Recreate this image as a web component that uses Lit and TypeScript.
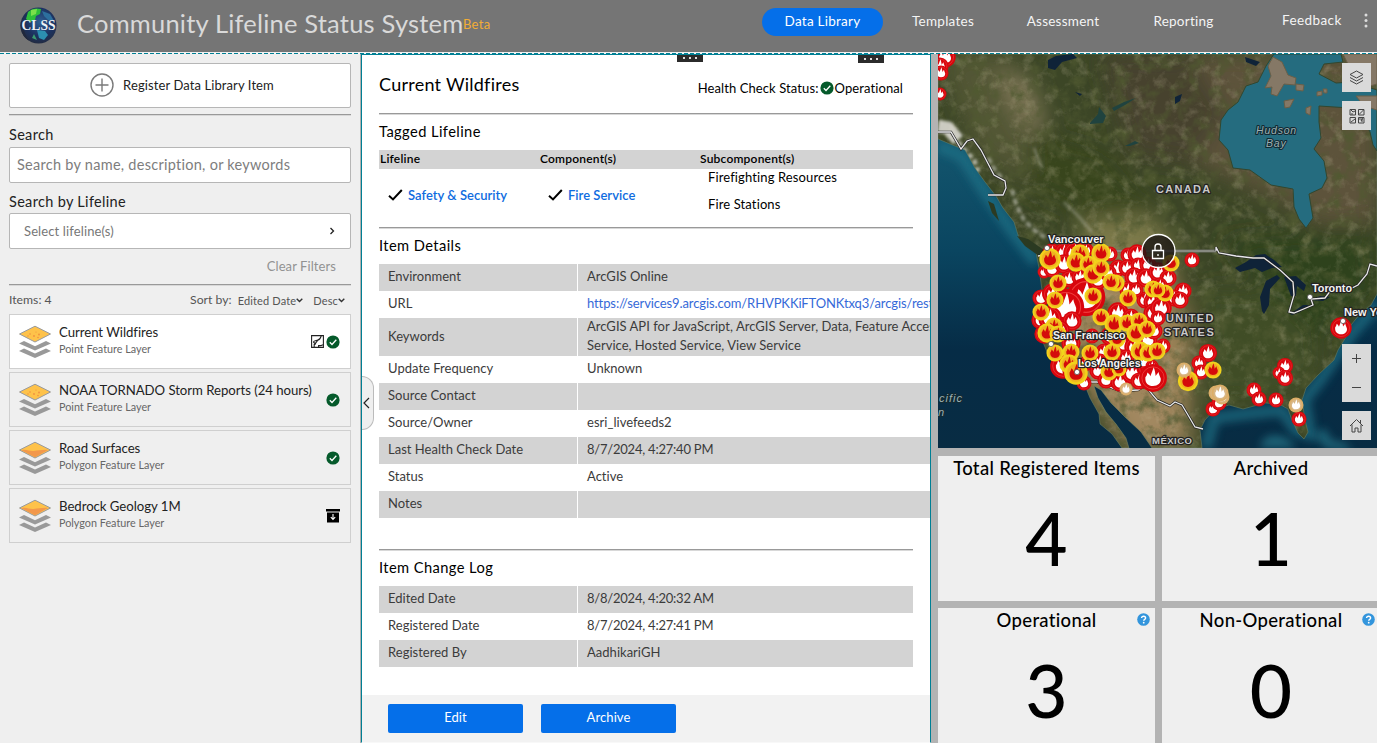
import { LitElement, html, svg, css, nothing } from "lit";
import { customElement, property } from "lit/decorators.js";

type Kind = "r" | "y" | "t";
type Fire = [number, number, number, Kind];

/* ---------- icons ---------- */
const okIcon = html`<svg class="ok" width="14" height="14" viewBox="0 0 14 14">
  <circle cx="7" cy="7" r="6.6" fill="#055a2b" />
  <path d="M3.8 7.3 6 9.5 10.3 4.8" fill="none" stroke="#fff" stroke-width="1.3" />
</svg>`;

const tick = html`<svg width="15" height="12" viewBox="0 0 15 12">
  <path d="M1 6.8 5 10.4 13.8 1" fill="none" stroke="#000" stroke-width="2" />
</svg>`;

const helpIcon = html`<svg width="13" height="13" viewBox="0 0 13 13">
  <circle cx="6.5" cy="6.5" r="6.3" fill="#3395dc" />
  <path d="M4.6 5.1c0-1.2.8-1.9 2-1.9s2 .7 2 1.8c0 1.4-1.9 1.4-1.9 2.8" fill="none" stroke="#fff" stroke-width="1.4" />
  <circle cx="6.7" cy="9.7" r=".9" fill="#fff" />
</svg>`;

const mapIcon = html`<svg width="13" height="13" viewBox="0 0 13 13" fill="none" stroke="#222" stroke-width="1.1">
  <path d="M.6.6h11.8v11.8H.6z" />
  <path d="M10.200.8C9.600 3.200 8.800 4.600 6.800 5.100 5.200 5.500 4.800 6 3.600 6 2.800 6 2.600 6.500 2.600 7.200L4.400 9M3.200 12V9.600c1.200 0 1.600-.8 1.600-1.800L7 5M7.600 12.200V10.600H10c.8 0 .8-.9 2.200-.9" />
</svg>`;

const archiveIcon = html`<svg width="14" height="14" viewBox="0 0 14 14">
  <path d="M0 0h14v2.600H0zM1 3.400h12v10H1z" fill="#000" />
  <path d="M7 5v5M4.800 8.200 7 10.400l2.200-2.200" fill="none" stroke="#fff" stroke-width="1.100" />
</svg>`;

const layerIcon = (polygon: boolean) => html`<svg width="34" height="34" viewBox="0 0 34 34">
  <path d="M1 26 6 23.500l11 5 11-5 5 2.500-16 7z" fill="#999" />
  <path d="M1 18.600 6 16l11 5.200L28 16l5 2.600-16 7z" fill="#999" />
  <path d="M1.500 9 17 1.200 32.500 9 17 17z" fill="#fec24a" stroke="#9a9a9a" stroke-width="1" />
  ${polygon
    ? svg`<path d="M3.500 9.200c4-1.600 8 1 12 .7 5-.4 9-1.500 14.500-1L17 16.300z" fill="#f2984c" />`
    : svg`<g fill="#f0903f"><circle cx="12" cy="9" r=".8"/><circle cx="16" cy="11" r=".9"/><circle cx="21" cy="9.500" r=".9"/><circle cx="10" cy="11" r=".7"/><circle cx="20" cy="12.500" r=".8"/><circle cx="18" cy="7" r=".6"/></g>`}
</svg>`;

const logo = html`<svg class="logo" width="37" height="37" viewBox="0 0 37 37">
  <defs>
    <radialGradient id="globe" cx=".55" cy=".4" r=".65">
      <stop offset="0" stop-color="#2f5f94" /><stop offset=".6" stop-color="#1c3260" /><stop offset="1" stop-color="#232a3c" />
    </radialGradient>
    <clipPath id="gc"><circle cx="18.500" cy="18.500" r="18" /></clipPath>
  </defs>
  <circle cx="18.500" cy="18.500" r="18" fill="url(#globe)" />
  <g clip-path="url(#gc)">
    <path d="M8 5c4-4 9-4 13-3l-1 5-4 2-1 4-5 2-4-3z" fill="#2fbf3a" />
    <path d="M11 3l6-1-1 5-5 2z" fill="#7be04a" />
    <path d="M22 4l8 3 4 7-6-1-4-4z" fill="#2c6f9e" />
    <path d="M17 23l8 1 3 4-4 5-5-2z" fill="#2c8fb0" />
    <path d="M0 12c3 6 3 12 9 22H0z" fill="#20283c" />
    <path d="M14 27l3 6-5-2z" fill="#3a9a70" />
  </g>
  <text x="18.500" y="23" text-anchor="middle" textLength="34" lengthAdjust="spacingAndGlyphs" class="lt">CLSS</text>
</svg>`;

/* ---------- map data ---------- */
const fires: Fire[] = [
  [945, 57, 10, "r"], [940, 66, 8, "r"], [941, 73, 7, "r"], [940, 94, 6, "r"],
  [1052, 253, 9, "r"], [1064, 252, 9, "r"], [1075, 253, 11, "r"], [1086, 250, 7, "r"], [1110, 254, 7, "r"],
  [1128, 255, 7, "r"], [1137, 254, 9, "r"], [1044, 272, 6, "r"], [1052, 269, 8, "r"], [1064, 264, 9, "r"],
  [1060, 283, 8, "r"], [1069, 279, 8, "r"], [1080, 277, 8, "r"], [1090, 283, 8, "r"], [1118, 268, 8, "r"],
  [1127, 268, 8, "r"], [1138, 265, 7, "r"], [1148, 265, 8, "r"], [1134, 277, 9, "r"], [1146, 278, 9, "r"],
  [1158, 272, 9, "r"], [1041, 298, 8, "r"], [1053, 294, 10, "r"], [1086, 297, 18, "r"], [1066, 307, 17, "r"],
  [1098, 280, 9, "r"], [1108, 273, 8, "r"], [1041, 320, 9, "r"], [1050, 318, 11, "r"], [1072, 321, 9, "r"],
  [1044, 334, 9, "r"], [1060, 330, 9, "r"], [1071, 343, 9, "r"], [1092, 336, 7, "r"], [1055, 352, 7, "r"],
  [1118, 313, 10, "r"], [1131, 317, 8, "r"], [1145, 300, 8, "r"], [1153, 302, 9, "r"], [1128, 290, 8, "r"],
  [1136, 290, 7, "r"], [1153, 313, 9, "r"], [1110, 336, 9, "r"], [1124, 344, 9, "r"], [1135, 347, 10, "r"],
  [1148, 340, 9, "r"], [1063, 366, 12, "r"], [1072, 371, 9, "r"], [1084, 383, 7, "r"], [1098, 371, 8, "r"],
  [1106, 380, 8, "r"], [1115, 369, 9, "r"], [1120, 382, 9, "r"], [1132, 373, 10, "r"], [1139, 381, 8, "r"],
  [1144, 362, 7, "r"], [1104, 352, 8, "r"], [1100, 361, 7, "r"], [1126, 358, 8, "r"], [1085, 364, 7, "r"],
  [1168, 278, 8, "r"], [1183, 291, 8, "r"], [1174, 298, 8, "r"], [1180, 300, 8, "r"], [1161, 308, 10, "r"],
  [1154, 331, 8, "r"], [1163, 346, 7, "r"], [1152, 366, 6, "r"], [1160, 285, 7, "r"], [1158, 318, 7, "r"],
  [1153, 378, 13, "r"],
  [1192, 260, 7, "r"], [1341, 328, 10, "r"], [1208, 353, 8.500, "r"], [1199, 363, 7, "r"], [1201, 372, 7, "r"],
  [1285, 366, 7.500, "r"], [1279, 373, 6, "r"], [1285, 378, 7.500, "r"], [1254, 390, 7, "r"], [1259, 399, 7, "r"],
  [1276, 400, 7, "r"], [1213, 409, 7, "r"], [1219, 403, 7, "r"], [1299, 419, 7, "r"],
  [1050, 259, 10, "y"], [1080, 254, 9, "y"], [1076, 262, 9, "y"], [1101, 253, 9, "y"], [1088, 264, 8, "y"],
  [1093, 274, 9, "y"], [1101, 268, 8, "y"], [1116, 283, 8, "y"], [1111, 282, 8, "y"], [1058, 283, 8, "y"],
  [1055, 300, 8, "y"], [1041, 312, 8, "y"], [1093, 296, 8, "y"], [1128, 298, 8, "y"], [1153, 289, 8, "y"],
  [1101, 317, 8, "y"], [1114, 324, 9, "y"], [1127, 323, 8, "y"], [1139, 321, 8, "y"], [1136, 333, 9, "y"],
  [1147, 329, 8, "y"], [1054, 326, 8, "y"], [1047, 333, 9, "y"], [1058, 334, 8, "y"], [1117, 339, 8, "y"],
  [1055, 353, 8, "y"], [1071, 352, 8, "y"], [1090, 353, 8, "y"], [1112, 352, 8, "y"], [1140, 351, 9, "y"],
  [1148, 353, 8, "y"], [1069, 364, 9, "y"], [1076, 373, 11, "y"], [1109, 372, 8, "y"], [1119, 369, 7, "y"],
  [1171, 263, 8, "y"], [1165, 293, 8, "y"], [1158, 290, 7, "y"], [1157, 351, 8, "y"],
  [1213, 370, 8, "y"], [1188, 381, 9.500, "y"],
  [1184, 370, 7, "t"], [1126, 389, 6, "t"], [1216, 393, 7, "t"], [1222, 397, 7, "t"], [1220, 393, 8, "t"], [1296, 405, 7, "t"],
];

const fill: Record<Kind, [string, string, string]> = {
  r: ["#d8060d", "#d8060d", "#fff"],
  y: ["#f2d31b", "#efb321", "#d40b0b"],
  t: ["#dcae68", "#d8b684", "#fff"],
};

const flame = "M-.55-.05C-.47-.14-.42-.27-.4-.4-.28-.32-.22-.22-.19-.12-.11-.34-.02-.56.05-.78.14-.56.17-.34.19-.14.25-.22.34-.34.4-.43.43-.22.52-.1.56.06.58.38.34.58 0 .58-.34.58-.58.38-.55-.05z";

const fire = ([x, y, r, k]: Fire) => {
  const [ring, disc, glyph] = fill[k];
  return svg`<g transform="translate(${x} ${y}) scale(${r * 1.07})">
    <circle r="1" fill=${ring} />
    <circle r=".8" fill=${disc} stroke=${k === "r" ? "#ee3b3b" : ring} stroke-width=".06" />
    <path d=${flame} fill=${glyph} />
  </g>`;
};

const LAND = "M938 54H1377V294L1371 305 1360 314 1351 325 1346 337 1338 350 1334 360 1318 375 1306 388 1302 400 1305 420 1308 432 1304 439 1298 433 1292 420 1288 409 1279 404 1265 403 1254 406 1243 409 1229 405 1215 409 1205 420 1200 430 1202 448H1152L1141 432 1126 418 1111 403 1101 390 1094 386 1098 398 1106 412 1116 424 1126 438 1129 448H1122L1112 434 1100 424 1099 414 1090 398 1086 388 1076 379 1060 372 1047 352 1036 325 1037 308 1042 290 1039 268 1036 252 1019 238 1014 222 1003 208 996 196 985 182 975 168 965 150 950 144 938 139z";
const BAY = "M1274 54 1266 66 1258 82 1246 86 1238 102 1228 110 1221 120 1219 140 1228 150 1233 168 1250 170 1271 185 1293 189 1294 207 1299 219 1306 228 1313 218 1309 194 1322 188 1327 178 1324 161 1314 149 1321 138 1319 122 1319 106 1350 108 1362 116 1370 132 1373 145 1377 151V90L1352 82 1336 83 1319 74 1324 64 1343 62 1341 54z";
const ISLANDS = "M1273 57 1282 62 1288 75 1296 78 1295 85 1284 84 1277 96 1271 94 1272 87 1265 88 1271 76 1268 66zM1296 84 1304 85 1303 91 1296 90zM1284 101 1294 99 1290 107 1285 108zM1306 108 1311 106 1310 115 1306 113zM1317 92l5-1 0 4-5 1zM1323 89l4 0 0 4-3 0zM1343 54h34v30l-14 4-8-10zM1356 96l21 0 0 14-13-4z";
const LAKES = "M1235 268 1246 262 1256 255 1265 254 1274 260 1282 267 1272 268 1262 272 1255 268 1240 272zM1262 311 1260 297 1266 281 1277 275 1280 278 1270 289 1269 305 1264 314zM1284 277 1296 276 1306 285 1304 291 1297 286 1296 296 1291 296zM1290 314 1303 305 1309 305 1300 312 1292 315zM1310 300 1320 296 1330 297 1323 301zM1048 60 1056 56 1073 54 1077 58 1062 62 1055 70 1048 68zM1075 92l7 2-2 2zM1245 57l15 5-4 4-10-4zM1175 97l7-3-2 7-5 3z";
const LAKES2 = "M1090 123 1098 114 1099 107 1106 116 1103 123 1090 124zM1112 108 1124 102 1136 98 1125 105 1114 111zM1125 146l10-5 4 2-9 3z";

const relief = svg`
  <defs>
    <linearGradient id="sea" x1="0" y1="0" x2="0" y2="1"><stop offset="0" stop-color="#1b6379"/><stop offset=".5" stop-color="#0a4560"/><stop offset=".75" stop-color="#062c46"/><stop offset="1" stop-color="#082c43"/></linearGradient>
    <filter id="soft" x="-50%" y="-50%" width="200%" height="200%"><feGaussianBlur stdDeviation="11"/></filter>
    <filter id="soft2" x="-50%" y="-50%" width="200%" height="200%"><feGaussianBlur stdDeviation="4"/></filter>
    <filter id="soft3" x="-50%" y="-50%" width="200%" height="200%"><feGaussianBlur stdDeviation="1.500"/></filter>
    <filter id="grain" x="0" y="0" width="100%" height="100%"><feTurbulence type="fractalNoise" baseFrequency=".07" numOctaves="5" seed="8"/><feColorMatrix values="0 0 0 0 .08  0 0 0 0 .1  0 0 0 0 .03  2.200 0 0 0 -1.000"/></filter>
    <filter id="glint" x="0" y="0" width="100%" height="100%"><feTurbulence type="fractalNoise" baseFrequency=".09" numOctaves="5" seed="31"/><feColorMatrix values="0 0 0 0 .62  0 0 0 0 .56  0 0 0 0 .38  0 2.000 0 0 -1.000"/></filter>
    <clipPath id="land"><path d=${LAND}/></clipPath>
  </defs>
  <rect x="938" y="54" width="439" height="394" fill="url(#sea)"/>
  <g filter="url(#soft2)" fill="none" stroke="#23778b" stroke-width="12" opacity=".65"><path d="M938 146 962 156 985 192 1010 228 1036 262"/><path d="M1377 304 1352 333 1320 380 1304 400 1310 434 1296 430 1282 410 1245 414 1214 418 1206 448" /></g>
  <path d="M1260 448C1262 432 1285 430 1296 448z M1325 448l-10-14 10-6 6 12 14 3 8 9z" fill="#2a8698" opacity=".6" filter="url(#soft2)"/>
  <g clip-path="url(#land)">
    <rect x="938" y="54" width="439" height="394" fill="#3c4626"/>
    <g filter="url(#soft)">
      <path d="M1160 54h217v170h-60l-30-20-90-40-50-30z" fill="#5d523b"/>
      <path d="M1100 54l90 0 40 60-40 50-60-10z" fill="#47432f"/>
      <path d="M938 54l70 0 30 60-10 70-50-30z" fill="#525734"/>
      <path d="M1000 70l30 10 15 40-10 20-30-50z" fill="#857b5b"/>
      <path d="M1080 220l70-5 30 35-20 30-80-10z" fill="#7c7948"/>
      <path d="M1070 260l100 0 20 70 0 70 0 48-60 0-60-80z" fill="#9d8358"/>
      <path d="M1100 390l70 10 20 48-60 0z" fill="#a28860"/>
      <path d="M1200 290l110 0 10 80-40 30-70 0z" fill="#414d27"/>
      <path d="M1220 240l150-10 7 60-60 50-40-40z" fill="#2f421d"/>
      <path d="M1030 130l70 20 60 60-70 10-60-30z" fill="#38451f"/>
    </g>
    <rect x="938" y="54" width="439" height="394" filter="url(#grain)"/>
    <rect x="938" y="54" width="439" height="394" filter="url(#glint)" opacity=".32"/>
    <g filter="url(#soft3)" fill="none" stroke="#e4e2dc">
      <path d="M938 126 948 128 958 140" stroke-width="13" opacity=".85"/>
      <path d="M958 142 966 152 974 160 978 172" stroke-width="5" opacity=".7" stroke-dasharray="5 3"/>
      <path d="M988 158 996 172 1002 178M1012 190 1016 204 1024 220 1034 230 1046 238" stroke-width="4" opacity=".5" stroke-dasharray="6 3"/>
      <path d="M1034 148 1042 168M1064 202 1080 218 1092 232" stroke-width="3" opacity=".3"/>
    </g>
  </g>
  <path d=${LAND} fill="none" stroke="#6f8a6d" stroke-width=".8" opacity=".6"/>
  <path d=${BAY} fill="#256c7f" stroke="#32472f" stroke-width="1"/>
  <path d=${ISLANDS} fill="#857866" stroke="#6a5f48" stroke-width="1"/>
  <path d=${LAKES} fill="#0f2338"/>
  <path d=${LAKES2} fill="#20433f"/>
  <path d="M988 201 994 204 999 221 992 213z" fill="#2b3a22"/>
  <path d="M1017 236 1028 239 1044 250 1039 256 1025 246z" fill="#2b3a22"/>
`;

const BORDERS = [
  "M938 132 951 132 961 149 967 141 973 139 981 150 994 175 1005 181 1006 188 1003 195 988 195",
  "M1216 251 1216 247 1219 253 1236 256 1253 258 1264 258 1280 270 1293 282 1294 295 1289 312 1294 313 1313 305 1311 299 1325 298 1331 290 1346 291 1358 285 1367 274 1370 264 1377 266",
  "M1080 382 1097 382 1120 391 1138 390 1143 387 1147 388 1157 400 1170 406 1175 402 1182 405 1188 415 1195 427 1203 429",
  "M1047 251 1044 255 1038 256",
];

interface Place { t: string; x: number; y: number; s: number; sp?: number; c?: string }
const places: Place[] = [
  { t: "Vancouver", x: 1048, y: 243, s: 11 },
  { t: "San Francisco", x: 1053, y: 339, s: 10.600 },
  { t: "Los Angeles", x: 1078, y: 367, s: 10.600 },
  { t: "Toronto", x: 1312, y: 292, s: 10.800 },
  { t: "New York", x: 1344, y: 316, s: 11 },
  { t: "CANADA", x: 1156, y: 193, s: 11, sp: 1.300, c: "ctry" },
  { t: "UNITED", x: 1166, y: 322, s: 11, sp: 1.300, c: "ctry" },
  { t: "STATES", x: 1164, y: 335.500, s: 11, sp: 1.600, c: "ctry" },
  { t: "MÉXICO", x: 1152, y: 444, s: 9.500, sp: .5, c: "ctry" },
  { t: "Hudson", x: 1256, y: 134, s: 10.500, sp: .8, c: "water" },
  { t: "Bay", x: 1266, y: 146.500, s: 10.500, sp: .8, c: "water" },
  { t: "cific", x: 939, y: 402, s: 11, sp: 1, c: "water" },
  { t: "n", x: 938, y: 416, s: 11, sp: 1, c: "water" },
];
const dots: [number, number][] = [[1047, 248], [1051, 344], [1077, 372], [1310, 297], [1343, 321]];

@customElement("lifeline-map")
export class LifelineMap extends LitElement {
  static styles = css`
    :host { display: block; position: relative; overflow: hidden; background: #0b3f5a; }
    .canvas { display: block; width: 439px; height: 394px; }
    .label { font-family: "Liberation Sans", Arial, sans-serif; font-weight: 700; fill: #f3f3f3; stroke: #222; stroke-width: 2.4px; paint-order: stroke; stroke-linejoin: round; }
    .ctry { fill: #c9c9c9; }
    .water { fill: #9db1b4; font-style: italic; font-weight: 400; stroke: #122a33; stroke-width: 2.2px; }
    .tools { position: absolute; right: 6px; top: 9px; bottom: 8px; display: flex; flex-direction: column; gap: 9px; }
    .tool { width: 29px; height: 29px; background: #dadada; display: flex; align-items: center; justify-content: center; }
    .zoom { margin-top: auto; height: 58px; flex-direction: column; }
    .half { flex: 1; display: flex; align-items: center; }
    svg { fill: none; stroke: #444; }
    .canvas { stroke: none; }
  `;

  render() {
    return html`
      <svg class="canvas" viewBox="938 54 439 394">
        ${relief}
        <path d="M1048 251H1216" stroke="#6d6f66" stroke-width="3" /><path d="M1048 251H1216" stroke="#a3a59c" stroke-width="1" />
        ${BORDERS.map((d) => svg`<path d=${d} fill="none" stroke="#222" stroke-width="2.600"/><path d=${d} fill="none" stroke="#e9e9e9" stroke-width="1.300"/>`)}
        ${fires.map(fire)}
        ${dots.map(([x, y]) => svg`<circle cx=${x} cy=${y} r="2.600" fill="#fff" stroke="#555" stroke-width=".8"/>`)}
        ${places.map((p) => svg`<text class="label ${p.c ?? ""}" x=${p.x} y=${p.y} font-size=${p.s} letter-spacing=${p.sp ?? 0}>${p.t}</text>`)}
        <circle cx="1158.500" cy="251" r="16.500" fill="#1b1714" fill-opacity=".8" stroke="#fff" stroke-width="1.300" />
        <path d="M1152.500 250.500h11v8h-11zM1155 250.500v-3.500a3 3 0 0 1 6 0v3.500M1158 254v2" fill="none" stroke="#fff" stroke-width="1.300" />
      </svg>
      <div class="tools">
        <div class="tool"><svg width="15" height="15" viewBox="0 0 15 15"><path d="M7.500 1 14 4.500 7.500 8 1 4.500zM1 7.500 7.500 11 14 7.500M1 10.500 7.500 14 14 10.500" /></svg></div>
        <div class="tool"><svg width="16" height="16" viewBox="0 0 16 16"><path d="M1 1.500h5.500V7H1zM9.500 1.500H15V7H9.500zM1 9.500h5.500V15H1zM9.500 9.500H15V15H9.500zM2 2l2 2 2-1M3 7V5M10 6.500l4.500-4.500M2 14l4-3M10 11h3v3M12 13l2-3" /></svg></div>
        <div class="tool zoom">
          <div class="half"><svg width="11" height="11" viewBox="0 0 11 11"><path d="M5.500 1v9M1 5.500h9" /></svg></div>
          <div class="half"><svg width="11" height="11" viewBox="0 0 11 11"><path d="M1 5.500h9" /></svg></div>
        </div>
        <div class="tool"><svg width="15" height="15" viewBox="0 0 15 15"><path d="M1 8 7.500 1.500 14 8M3 6.500v7.500h3v-4h3v4h3V6.500M11.500 5V2" /></svg></div>
      </div>
    `;
  }
}

@customElement("stat-card")
export class StatCard extends LitElement {
  @property() label = "";
  @property() value = "";
  @property({ type: Boolean }) help = false;

  static styles = css`
    :host { display: grid; grid-template-columns: 1fr; background: #efefef; color: #000; position: relative; align-content: start; text-align: center; }
    .label { font-size: 18.5px; line-height: 25px; letter-spacing: 0.32px; font-weight: 500; white-space: nowrap; }
    .value { font-size: 73px; line-height: 115px; font-weight: 500; letter-spacing: 0; }
    .help { position: absolute; right: 5px; top: 5px; display: flex; }
  `;

  render() {
    return html`<div class="label">${this.label}</div>
      <div class="value">${this.value}</div>
      ${this.help ? html`<div class="help">${helpIcon}</div>` : nothing}`;
  }
}

const items = [
  { name: "Current Wildfires", type: "Point Feature Layer", active: true, map: true },
  { name: "NOAA TORNADO Storm Reports (24 hours)", type: "Point Feature Layer" },
  { name: "Road Surfaces", type: "Polygon Feature Layer" },
  { name: "Bedrock Geology 1M", type: "Polygon Feature Layer", archived: true },
];

const details: [string, unknown][] = [
  ["Environment", "ArcGIS Online"],
  ["URL", html`<span class="url">https://services9.arcgis.com/RHVPKKiFTONKtxq3/arcgis/rest/services</span>`],
  ["Keywords", html`ArcGIS API for JavaScript, ArcGIS Server, Data, Feature Access, Feature<br />Service, Hosted Service, View Service`],
  ["Update Frequency", "Unknown"],
  ["Source Contact", ""],
  ["Source/Owner", "esri_livefeeds2"],
  ["Last Health Check Date", html`<span class="date">8/7/2024, 4:27:40 PM</span>`],
  ["Status", "Active"],
  ["Notes", ""],
];

const log: [string, unknown][] = [
  ["Edited Date", html`<span class="date">8/8/2024, 4:20:32 AM</span>`],
  ["Registered Date", html`<span class="date">8/7/2024, 4:27:41 PM</span>`],
  ["Registered By", "AadhikariGH"],
];

@customElement("app-root")
export class AppRoot extends LitElement {
  static styles = css`
    :host { display: flex; flex-direction: column; width: 1377px; height: 743px; overflow: hidden; font-family: Lato, "Open Sans", sans-serif; font-size: 13.5px; letter-spacing: 0.3px; color: #222; background: #b3b3b3; }
    * { box-sizing: border-box; }
    svg { display: block; flex: none; }
    .header { height: 52px; flex: none; background: #757575; display: flex; align-items: flex-start; color: #f4f4f4; padding-left: 20px; white-space: nowrap; }
    .logo { margin-top: 7px; }
    .lt { font-family: "Liberation Serif", serif; font-weight: 700; font-size: 15px; fill: #eef2f6; letter-spacing: 0; }
    .title { margin-left: 20px; font-size: 25.5px; line-height: 47px; letter-spacing: 0.2px; color: #d9d9d9; width: 386px; font-weight: 400; }
    .beta { color: #f2ad35; font-size: 13px; line-height: 49px; letter-spacing: 0.3px; width: 299px; }
    .nav { display: grid; grid-template-columns: 121px 120px 120px 121px; padding-top: 8px; }
    .tab { height: 28px; line-height: 27px; text-align: center; letter-spacing: 0.25px; }
    .on { background: #056fe9; border-radius: 14px; color: #fff; }
    .feedback { margin-left: 38px; line-height: 41px; width: 82px; letter-spacing: 0.4px; }
    .kebab { padding-top: 13px; }
    .dash { height: 2px; flex: none; background: repeating-linear-gradient(90deg, #007f94 0 4px, #f4f4f4 4px 6px) 0 1px / 100% 1px no-repeat, #f0f0f0; }
    .body { flex: 1; min-height: 0; display: grid; grid-template-columns: 361px 570px 446px; }

    .side { background: #efefef; border-right: 1px solid #b0b0b0; padding: 9px 9px 0; display: flex; flex-direction: column; white-space: nowrap; }
    .box { border: 1px solid #b6b6b6; border-radius: 2px; background: #fff; display: flex; align-items: center; flex: none; }
    .register { height: 45px; justify-content: center; gap: 9px; font-size: 13px; padding: 0 0 1px 4px; letter-spacing: 0.1px; }
    .rule { height: 2px; flex: none; background: #999; border-bottom: 1px solid #d8d8d8; }
    .rule-top { margin: 6px 0 9px; }
    .lbl { font-size: 14.5px; line-height: 20px; color: #222; letter-spacing: 0.32px; }
    .input { height: 36px; margin: 2px 0 9px; padding-bottom: 2px; }
    .ph { font-size: 14.5px; color: #7d7d7d; padding-left: 7px; letter-spacing: 0.27px; }
    .select { justify-content: space-between; margin: 1px 0 0; padding: 0 15px 1px 14px; color: #777; font-size: 13px; letter-spacing: 0.12px; }
    .clear { text-align: right; padding-right: 15px; font-size: 13px; line-height: 20px; color: #929292; margin: 7px 0 8px; letter-spacing: 0.08px; }
    .sort { display: flex; align-items: center; height: 28px; font-size: 12.2px; color: #555; padding: 0 6px 2px 0; letter-spacing: 0.02px; }
    .sort-l { margin-left: auto; margin-right: 6px; }
    .sort-v { font-size: 11px; display: flex; align-items: center; padding-top: 3px; letter-spacing: 0.15px; }
    .gap { margin-left: 10px; }
    .cards { display: grid; grid-template-columns: minmax(0, 1fr); gap: 3px; }
    .card { height: 55px; border: 1px solid #cfcfcf; display: flex; align-items: center; padding: 0 10px 0 8px; gap: 7px; }
    .active { background: #fff; }
    .meta { flex: 1; min-width: 0; color: #222; font-size: 13.2px; line-height: 17px; padding-bottom: 2px; letter-spacing: -0.04px; }
    .type { font-size: 10.8px; line-height: 16px; color: #666; letter-spacing: 0; }
    .icons { display: flex; gap: 2px; align-items: center; }

    .detail { background: #fff; border: 1px solid #007f94; border-bottom: 1px solid #f8f8f8; position: relative; display: flex; flex-direction: column; overflow: hidden; color: #000; white-space: nowrap; }
    .inner { width: 551px; padding-left: 17px; flex: 1; }
    .grip { position: absolute; top: -2px; left: 315px; width: 26px; height: 9px; background: #2b2b2b; display: flex; gap: 4px; align-items: center; justify-content: center; }
    .grip2 { left: 496px; top: -1px; }
    .grip i { width: 2px; height: 2px; background: #ddd; }
    .handle { position: absolute; left: -2px; top: 321px; width: 14px; height: 54px; background: #efefef; border: 1px solid #bbb; border-left: none; border-radius: 0 12px 12px 0; display: flex; align-items: center; justify-content: center; }
    .head { height: 58px; display: flex; align-items: center; justify-content: space-between; }
    .name { font-size: 18px; letter-spacing: 0.25px; }
    .health { display: flex; align-items: center; gap: 1px; padding: 8px 10px 0 0; font-size: 13px; letter-spacing: 0.1px; }
    h3 { margin: 0; font-weight: 400; font-size: 14.7px; letter-spacing: 0.4px; line-height: 32px; height: 35px; }
    .lh { display: grid; grid-template-columns: 160px 160px 1fr; background: #d3d3d3; height: 19px; line-height: 18px; font-size: 12px; font-weight: 600; padding-left: 1px; letter-spacing: 0.2px; }
    .lr { display: grid; grid-template-columns: 160px 160px 1fr; height: 58px; padding-left: 9px; }
    .lk { display: flex; align-items: center; gap: 5px; color: #0f6ce0; font-weight: 600; font-size: 13px; height: 51px; letter-spacing: 0.02px; }
    .sub { line-height: 27px; margin-top: -5px; font-size: 13px; letter-spacing: 0.12px; }
    .table { display: grid; color: #3b3b3b; }
    .wide { width: 571px; }
    .row { display: grid; grid-template-columns: 198px 1fr; column-gap: 1px; min-height: 27px; line-height: 19px; font-size: 13px; letter-spacing: 0.02px; }
    .cell { padding-left: 9px; display: flex; align-items: center; padding-bottom: 2px; overflow: hidden; }
    .row:nth-child(odd) .cell { background: #d3d3d3; }
    .kw { height: 38px; }
    .url { color: #3569d8; letter-spacing: -0.1px; }
    .date { letter-spacing: -0.22px; }
    .foot { height: 47px; background: #f2f2f2; padding: 9px 26px; display: flex; gap: 18px; }
    .btn { width: 135px; height: 29px; border-radius: 2px; background: #056fe9; color: #fff; text-align: center; line-height: 26px; font-size: 13px; letter-spacing: 0.1px; }
    .tb { height: 31px; }

    .right { display: grid; grid-template-columns: 439px; grid-template-rows: 394px 287px; row-gap: 8px; padding-left: 7px; background: #b3b3b3; }
    .stats { display: grid; grid-template-columns: 217px 218px; grid-template-rows: 145px 135px; gap: 7px; }
  `;

  rows(data: [string, unknown][]) {
    return data.map(([k, v]) => html`<div class="row ${k === "Keywords" ? "kw" : ""}"><div class="cell">${k}</div><div class="cell"><span>${v}</span></div></div>`);
  }

  render() {
    const caret = html`<svg width="7" height="5" viewBox="0 0 7 5"><path d="M.7.8 3.500 3.600 6.300.8" fill="none" stroke="#333" stroke-width="1.400" /></svg>`;
    return html`
      <div class="header">
        ${logo}
        <div class="title">Community Lifeline Status System</div>
        <div class="beta">Beta</div>
        <div class="nav">
          <div class="tab on">Data Library</div><div class="tab">Templates</div><div class="tab">Assessment</div><div class="tab">Reporting</div>
        </div>
        <div class="feedback">Feedback</div>
        <svg class="kebab" width="4" height="28" viewBox="0 0 4 15"><g fill="#ddd"><circle cx="2" cy="2" r="1.500" /><circle cx="2" cy="7.500" r="1.500" /><circle cx="2" cy="13" r="1.500" /></g></svg>
      </div>
      <div class="dash"></div>
      <div class="body">
        <div class="side">
          <div class="box register">
            <svg width="24" height="24" viewBox="0 0 24 24" fill="none" stroke="#7a7a7a" stroke-width="1.400"><circle cx="12" cy="12" r="11" /><path d="M12 5.500v13M5.500 12h13" /></svg>
            Register Data Library Item
          </div>
          <div class="rule rule-top"></div>
          <div class="lbl">Search</div>
          <div class="box input"><span class="ph">Search by name, description, or keywords</span></div>
          <div class="lbl">Search by Lifeline</div>
          <div class="box input select"><span>Select lifeline(s)</span>
            <svg width="6" height="8" viewBox="0 0 6 8"><path d="M1.500 1 4.500 4 1.500 7" fill="none" stroke="#222" stroke-width="1.300" /></svg></div>
          <div class="clear">Clear Filters</div>
          <div class="rule"></div>
          <div class="sort"><span>Items: 4</span><span class="sort-l">Sort by:</span><span class="sort-v">Edited Date${caret}</span><span class="sort-v gap">Desc${caret}</span></div>
          <div class="cards">
            ${items.map((it) => html`<div class="card ${it.active ? "active" : ""}">
              ${layerIcon(it.type.startsWith("Polygon"))}
              <div class="meta">${it.name}<div class="type">${it.type}</div></div>
              <div class="icons">${it.map ? mapIcon : nothing}${it.archived ? archiveIcon : okIcon}</div>
            </div>`)}
          </div>
        </div>
        <div class="detail">
          <div class="inner">
            <div class="head"><span class="name">Current Wildfires</span><span class="health">Health Check Status:${okIcon}Operational</span></div>
            <div class="rule"></div>
            <h3>Tagged Lifeline</h3>
            <div class="lh"><span>Lifeline</span><span>Component(s)</span><span>Subcomponent(s)</span></div>
            <div class="lr"><span class="lk">${tick}Safety &amp; Security</span><span class="lk">${tick}Fire Service</span>
              <div class="sub">Firefighting Resources<br />Fire Stations</div></div>
            <div class="rule"></div>
            <h3>Item Details</h3>
            <div class="table wide">${this.rows(details)}</div>
            <div class="tb"></div>
            <div class="rule"></div>
            <h3>Item Change Log</h3>
            <div class="table">${this.rows(log)}</div>
          </div>
          <div class="foot"><div class="btn">Edit</div><div class="btn">Archive</div></div>
          <div class="grip"><i></i><i></i><i></i></div>
          <div class="grip grip2"><i></i><i></i><i></i></div>
          <div class="handle"><svg width="7" height="12" viewBox="0 0 7 12"><path d="M6 1 1 6 6 11" fill="none" stroke="#222" stroke-width="1.200" /></svg></div>
        </div>
        <div class="right">
          <lifeline-map></lifeline-map>
          <div class="stats">
            <stat-card label="Total Registered Items" value="4"></stat-card>
            <stat-card label="Archived" value="1"></stat-card>
            <stat-card label="Operational" value="3" help></stat-card>
            <stat-card label="Non-Operational" value="0" help></stat-card>
          </div>
        </div>
      </div>
    `;
  }
}
